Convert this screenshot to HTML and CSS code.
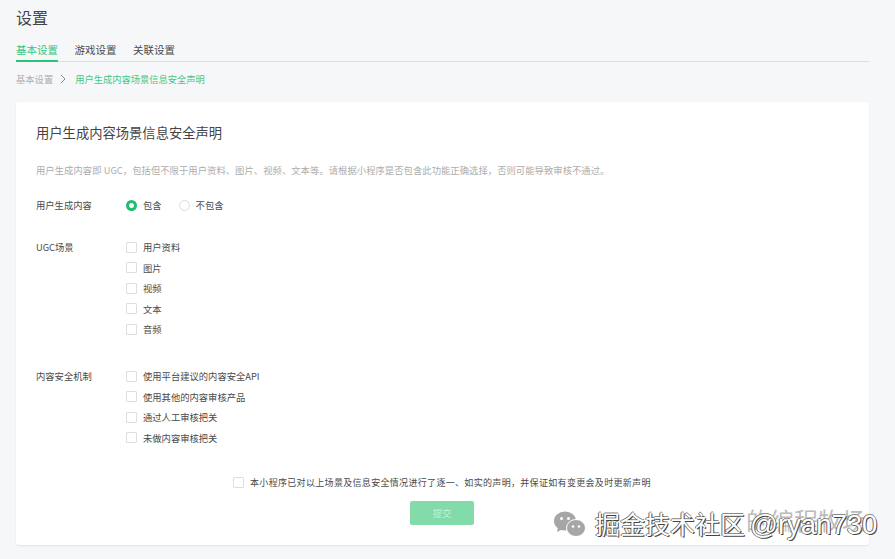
FILE: index.html
```html
<!DOCTYPE html>
<html lang="zh-CN">
<head>
<meta charset="utf-8">
<title>设置</title>
<link rel="stylesheet" href="styles.css">
</head>
<body>
<main class="page">
  <h1 class="page-title">设置</h1>
  <nav class="tabs">
    <a class="tab tab-active">基本设置</a>
    <a class="tab">游戏设置</a>
    <a class="tab">关联设置</a>
  </nav>
  <div class="crumbs">
    <span class="crumb">基本设置</span>
    <svg class="crumb-arrow" width="6" height="10" viewBox="0 0 6 10"><path d="M1 1l4 4-4 4" fill="none" stroke="#8a8a8a" stroke-width="1"/></svg>
    <span class="crumb-current">用户生成内容场景信息安全声明</span>
  </div>
  <section class="card">
    <h2 class="card-title">用户生成内容场景信息安全声明</h2>
    <p class="desc">用户生成内容即 UGC，包括但不限于用户资料、图片、视频、文本等。请根据小程序是否包含此功能正确选择，否则可能导致审核不通过。</p>
    <div class="row row-radio">
      <div class="label">用户生成内容</div>
      <div class="radios">
        <label class="option"><span class="radio radio-on"></span>包含</label>
        <label class="option"><span class="radio"></span>不包含</label>
      </div>
    </div>
    <div class="row row-ugc">
      <div class="label">UGC场景</div>
      <div class="checks">
        <label class="option"><span class="box"></span>用户资料</label>
        <label class="option"><span class="box"></span>图片</label>
        <label class="option"><span class="box"></span>视频</label>
        <label class="option"><span class="box"></span>文本</label>
        <label class="option"><span class="box"></span>音频</label>
      </div>
    </div>
    <div class="row row-safe">
      <div class="label">内容安全机制</div>
      <div class="checks">
        <label class="option"><span class="box"></span>使用平台建议的内容安全API</label>
        <label class="option"><span class="box"></span>使用其他的内容审核产品</label>
        <label class="option"><span class="box"></span>通过人工审核把关</label>
        <label class="option"><span class="box"></span>未做内容审核把关</label>
      </div>
    </div>
    <label class="option agree"><span class="box"></span>本小程序已对以上场景及信息安全情况进行了逐一、如实的声明，并保证如有变更会及时更新声明</label>
    <div class="actions"><button class="submit" type="button">提交</button></div>
  </section>
</main>
<div class="watermark">
  <svg class="wm-icon" width="32" height="26" viewBox="0 0 32 26">
    <ellipse cx="11" cy="10" rx="11" ry="9.5" fill="#a6a6a6"/>
    <path d="M4 16l-1 5 6-3z" fill="#a6a6a6"/>
    <circle cx="7.5" cy="7.5" r="1.5" fill="#fff"/>
    <circle cx="14.5" cy="7.5" r="1.5" fill="#fff"/>
    <ellipse cx="22" cy="17" rx="9.5" ry="8.5" fill="#a6a6a6" stroke="#fff" stroke-width="1"/>
    <circle cx="19" cy="15.5" r="1.3" fill="#fff"/>
    <circle cx="25" cy="15.5" r="1.3" fill="#fff"/>
  </svg>
  <span class="wm-under">的编程牧场</span>
  <span class="wm-text">掘金技术社区<span class="wm-id">@ryan730</span></span>
</div>
</body>
</html>
```
FILE: styles.css
```css
* { box-sizing: border-box; }
html, body { margin: 0; height: 100%; }
body {
  position: relative;
  width: 895px;
  height: 559px;
  overflow: hidden;
  background: #f6f7f9;
  font-family: "Noto Sans CJK SC", "Liberation Sans", sans-serif;
  color: #4a4a4a;
}
.page { padding: 7px 26px 0 16px; }
.page-title {
  margin: 0;
  font-size: 16px;
  line-height: 21px;
  font-weight: 400;
  color: #444;
}
.tabs {
  display: flex;
  gap: 16.5px;
  margin-top: 12px;
  height: 22px;
  border-bottom: 1px solid #dcdee0;
}
.tab {
  font-size: 10.5px;
  line-height: 20px;
  height: 22px;
  color: #4a4a4a;
}
.tab-active { color: #35c47c; border-bottom: 2px solid #2dc277; }
.crumbs {
  display: flex;
  align-items: center;
  height: 14px;
  margin-top: 10px;
  font-size: 9.3px;
  line-height: 14px;
}
.crumb { color: #b0b0b0; }
.crumb-arrow { margin: 0 9px 0 7px; }
.crumb-current { color: #3ec986; font-size: 9.25px; }
.card {
  height: 443px;
  margin-top: 16px;
  padding: 21px 20px 0;
  background: #fff;
  border-radius: 3px;
  box-shadow: 0 1px 2px rgba(0, 0, 0, .08);
}
.card-title {
  margin: 0;
  font-size: 13.3px;
  line-height: 19px;
  font-weight: 400;
  color: #444;
}
.desc {
  margin: 21px 0 0;
  font-size: 9.33px;
  line-height: 14px;
  letter-spacing: .03px;
  color: #adadad;
}
.row { display: flex; }
.row-radio { margin-top: 21px; }
.row-ugc { margin-top: 28px; }
.row-safe { margin-top: 33px; }
.label {
  width: 90px;
  font-size: 9.3px;
  line-height: 14px;
  color: #4a4a4a;
}
.radios { display: flex; gap: 17px; }
.checks { display: flex; flex-direction: column; gap: 6.5px; }
.option {
  display: flex;
  align-items: center;
  height: 14px;
  font-size: 9.3px;
  line-height: 14px;
  color: #4a4a4a;
}
.radio {
  width: 11px;
  height: 11px;
  margin-right: 6px;
  border: 1px solid #dcdcdc;
  border-radius: 50%;
  background: #fff;
}
.radio-on { border: 3px solid #1fbd70; }
.box {
  width: 11px;
  height: 11px;
  margin-right: 6px;
  border: 1px solid #dedede;
  border-radius: 1px;
  background: #fff;
}
.agree { margin: 31px 0 0 197px; font-size: 9px; letter-spacing: .32px; }
.actions { display: flex; justify-content: center; margin: 11px 1px 0 0; }
.submit {
  width: 64px;
  height: 24px;
  padding: 0;
  border: 0;
  border-radius: 2px;
  background: #83dba9;
  color: #c6f0d9;
  font: inherit;
  font-size: 9.3px;
}
.watermark {
  position: absolute;
  left: 554px;
  top: 509px;
  width: 330px;
  height: 30px;
  font-size: 25px;
  line-height: 30px;
  white-space: nowrap;
}
.wm-icon { position: absolute; left: 0; top: 2px; }
.wm-under {
  position: absolute;
  left: 192px;
  top: -4px;
  color: #bcbcbc;
  font-size: 24px;
}
.wm-text {
  position: absolute;
  left: 41px;
  top: 1px;
  font-family: "Liberation Sans", "Noto Sans CJK SC", sans-serif;
  color: #fff;
  text-shadow: 1px 1px 0 #444, -1px 0 0 #666, 0 -1px 0 #888;
}
.wm-id { margin-left: 5px; font-size: 27.5px; }
```
